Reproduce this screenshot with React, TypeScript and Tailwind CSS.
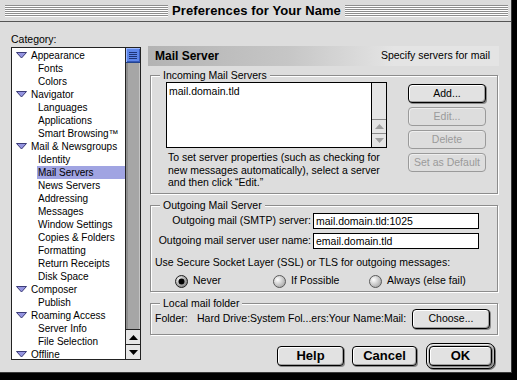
import React from "react";

const sans = "font-['Liberation_Sans',Arial,sans-serif]";

type Item = { label: string; top?: boolean; selected?: boolean };

const categories: Item[] = [
  { label: "Appearance", top: true },
  { label: "Fonts" },
  { label: "Colors" },
  { label: "Navigator", top: true },
  { label: "Languages" },
  { label: "Applications" },
  { label: "Smart Browsing™" },
  { label: "Mail & Newsgroups", top: true },
  { label: "Identity" },
  { label: "Mail Servers", selected: true },
  { label: "News Servers" },
  { label: "Addressing" },
  { label: "Messages" },
  { label: "Window Settings" },
  { label: "Copies & Folders" },
  { label: "Formatting" },
  { label: "Return Receipts" },
  { label: "Disk Space" },
  { label: "Composer", top: true },
  { label: "Publish" },
  { label: "Roaming Access", top: true },
  { label: "Server Info" },
  { label: "File Selection" },
  { label: "Offline", top: true },
];

const Stripes = () => (
  <div className="flex-1 h-[12px] bg-[repeating-linear-gradient(to_bottom,#8e8e8e_0px,#8e8e8e_1px,#ffffff_1px,#ffffff_2px)]" />
);

const Triangle = () => (
  <svg width="11" height="7" viewBox="0 0 11 7" className="shrink-0">
    <polygon points="0.5,0.5 10.5,0.5 5.5,6" fill="#9494e0" stroke="#3c3c78" strokeWidth="1" />
  </svg>
);

const Arrow = ({ up, disabled }: { up?: boolean; disabled?: boolean }) => (
  <svg width="9" height="5" viewBox="0 0 9 5">
    <polygon
      points={up ? "0,5 9,5 4.5,0" : "0,0 9,0 4.5,5"}
      fill={disabled ? "#a0a0a0" : "#000000"}
    />
  </svg>
);

const MacButton = ({
  children,
  disabled,
  className = "",
}: {
  children: React.ReactNode;
  disabled?: boolean;
  className?: string;
}) => (
  <div
    className={
      "flex items-center justify-center rounded-[4px] border " +
      (disabled
        ? "border-[#9a9a9a] text-[#9a9a9a] bg-[#dddddd] shadow-[inset_1px_1px_0_#eeeeee] "
        : "border-black text-black bg-[#e2e2e2] shadow-[inset_1px_1px_0_#ffffff,inset_-1px_-1px_0_#a0a0a0,1px_1px_0_#8a8a8a] ") +
      className
    }
  >
    {children}
  </div>
);

const GroupBox = ({
  label,
  className = "",
  children,
}: {
  label: string;
  className?: string;
  children: React.ReactNode;
}) => (
  <div
    className={
      "relative ml-[2px] w-[348px] border border-[#8c8c8c] shadow-[inset_1px_1px_0_#ffffff,1px_1px_0_#ffffff] " +
      className
    }
  >
    <span className="absolute left-[9px] -top-[7px] bg-[#dddddd] px-[3px] text-[10.5px] leading-[13px]">
      {label}
    </span>
    {children}
  </div>
);

const Radio = ({ on, label, className = "" }: { on?: boolean; label: string; className?: string }) => (
  <div className={"flex items-center gap-[5px] " + className}>
    <svg width="13" height="13" viewBox="0 0 13 13">
      <defs>
        <radialGradient id={"rg" + label.length} cx="0.35" cy="0.35" r="0.7">
          <stop offset="0" stopColor="#ffffff" />
          <stop offset="1" stopColor={on ? "#7a7a7a" : "#a8a8a8"} />
        </radialGradient>
      </defs>
      <circle cx="6.5" cy="6.5" r="6" fill={`url(#rg${label.length})`} stroke={on ? "#222" : "#5a5a5a"} strokeWidth="1" />
      {on && <circle cx="6.5" cy="6.5" r="3" fill="#000" />}
    </svg>
    <span>{label}</span>
  </div>
);

export default function App() {
  return (
    <div className={"w-[517px] h-[380px] bg-black overflow-hidden " + sans}>
      <div className="w-[512px] h-[373px] bg-[#dddddd] border-r border-b border-[#3a3a3a] flex flex-col text-black">
        {/* title bar */}
        <div className="h-[22px] shrink-0 flex items-center pl-[5px] pr-[3px] border-b border-[#555555] bg-[#dcdcdc]">
          <Stripes />
          <div className="px-[4px] text-[13px] font-bold leading-[16px] tracking-[0.1px]">
            Preferences for Your Name
          </div>
          <Stripes />
        </div>

        <div className="flex flex-1">
          {/* left column */}
          <div className="w-[148px] shrink-0 pl-[11px] pt-[10px]">
            <div className="h-[14px] text-[10.5px] leading-[14px]">Category:</div>
            <div className="mt-[1px] w-[130px] h-[313px] border border-[#222222] flex bg-white">
              <div className="flex-1 pt-[1px] overflow-hidden text-[10px]">
                {categories.map((c) => (
                  <div
                    key={c.label}
                    className={
                      "h-[13px] leading-[13px] flex items-center whitespace-nowrap " +
                      (c.top ? "pl-[4px] gap-[3px]" : "pl-[25px]")
                    }
                  >
                    {c.top && <Triangle />}
                    <span className={c.selected ? "bg-[#a0a4e2] pl-[1px] flex-1 h-[13px]" : "pl-[1px]"}>
                      {c.label}
                    </span>
                  </div>
                ))}
              </div>
              <div className="w-[15px] border-l border-[#222222] flex flex-col">
                <div className="h-[15px] bg-[#5d86ea] border-b border-[#22448f] shadow-[inset_1px_1px_0_#9cb8ff,inset_-1px_-1px_0_#3558b8] flex flex-col items-center justify-center gap-[1px]">
                  <div className="w-[8px] h-[1px] bg-[#1d3478]" />
                  <div className="w-[8px] h-[1px] bg-[#1d3478]" />
                  <div className="w-[8px] h-[1px] bg-[#1d3478]" />
                  <div className="w-[8px] h-[1px] bg-[#1d3478]" />
                </div>
                <div className="flex-1 bg-[#a6a6a6] shadow-[inset_2px_0_0_#8e8e8e,inset_-1px_0_0_#c4c4c4]" />
                <div className="h-[15px] border-t border-[#222222] bg-[#e6e6e6] flex items-center justify-center">
                  <Arrow up />
                </div>
                <div className="h-[15px] border-t border-[#222222] bg-[#e6e6e6] flex items-center justify-center">
                  <Arrow />
                </div>
              </div>
            </div>
          </div>

          {/* right column */}
          <div className="w-[352px] pt-[24px] flex flex-col">
            <div className="h-[20px] w-[351px] flex items-center justify-between pl-[7px] pr-[9px] bg-[linear-gradient(to_right,#b3b3b3_0%,#c6c6c6_40%,#dcdcdc_62%,#e4e4e4_70%)]">
              <span className="text-[12px] font-bold">Mail Server</span>
              <span className="text-[10.5px]">Specify servers for mail</span>
            </div>

            {/* incoming */}
            <GroupBox label="Incoming Mail Servers" className="mt-[9px] h-[119px]">
              <div className="flex pl-[15px] pt-[6px] text-[10.5px]">
                <div className="w-[221px]">
                  <div className="h-[66px] border border-black bg-white flex">
                    <div className="flex-1 pl-[2px] pt-[2px] leading-[12px]">mail.domain.tld</div>
                    <div className="w-[15px] border-l border-black bg-[#e4e4e4] flex flex-col justify-end">
                      <div className="h-[14px] border-t border-[#8a8a8a] flex items-center justify-center">
                        <Arrow up disabled />
                      </div>
                      <div className="h-[14px] border-t border-[#8a8a8a] flex items-center justify-center">
                        <Arrow disabled />
                      </div>
                    </div>
                  </div>
                  <div className="mt-[3px] pl-[2px] leading-[12.5px] whitespace-nowrap">
                    To set server properties (such as checking for
                    <br />
                    new messages automatically), select a server
                    <br />
                    and then click “Edit.”
                  </div>
                </div>
                <div className="ml-[21px] w-[78px] flex flex-col gap-[4px] pt-[2px]">
                  <MacButton className="h-[19px]">Add...</MacButton>
                  <MacButton disabled className="h-[19px]">Edit...</MacButton>
                  <MacButton disabled className="h-[19px]">Delete</MacButton>
                  <MacButton disabled className="h-[19px]">Set as Default</MacButton>
                </div>
              </div>
            </GroupBox>

            {/* outgoing */}
            <GroupBox label="Outgoing Mail Server" className="mt-[11px] h-[87px]">
              <div className="pt-[7px] text-[10.5px]">
                <div className="flex items-center h-[16px]">
                  <div className="w-[162px] text-right pr-[2px]">Outgoing mail (SMTP) server:</div>
                  <div className="w-[166px] h-[16px] border border-black bg-white pl-[2px] leading-[14px]">
                    mail.domain.tld:1025
                  </div>
                </div>
                <div className="flex items-center h-[16px] mt-[4px]">
                  <div className="w-[162px] text-right pr-[2px] whitespace-nowrap">Outgoing mail server user name:</div>
                  <div className="w-[166px] h-[16px] border border-black bg-white pl-[2px] leading-[14px]">
                    email.domain.tld
                  </div>
                </div>
                <div className="mt-[7px] pl-[4px] leading-[12px]">
                  Use Secure Socket Layer (SSL) or TLS for outgoing messages:
                </div>
                <div className="mt-[6px] pl-[24px] flex h-[14px]">
                  <Radio on label="Never" className="w-[98px]" />
                  <Radio label="If Possible" className="w-[96px]" />
                  <Radio label="Always (else fail)" />
                </div>
              </div>
            </GroupBox>

            {/* local folder */}
            <GroupBox label="Local mail folder" className="mt-[11px] h-[32px]">
              <div className="h-full flex items-center pl-[4px] pr-[7px] text-[10.5px]">
                <span className="w-[42px]">Folder:</span>
                <span className="whitespace-nowrap">Hard Drive:System Fol...ers:Your Name:Mail:</span>
                <MacButton className="ml-auto w-[78px] h-[20px]">Choose...</MacButton>
              </div>
            </GroupBox>

            {/* bottom buttons */}
            <div className="mt-[8px] h-[26px] flex items-center justify-end gap-[8px] pr-[5px] text-[13px] font-bold">
              <MacButton className="w-[67px] h-[20px]">Help</MacButton>
              <MacButton className="w-[65px] h-[20px]">Cancel</MacButton>
              <div className="ml-[1px] w-[69px] h-[26px] rounded-[7px] border border-black bg-[#bdbdbd] p-[2px] shadow-[inset_1px_1px_0_#f0f0f0,1px_1px_0_#777777]">
                <MacButton className="w-full h-full">OK</MacButton>
              </div>
            </div>
          </div>
        </div>
      </div>
    </div>
  );
}
